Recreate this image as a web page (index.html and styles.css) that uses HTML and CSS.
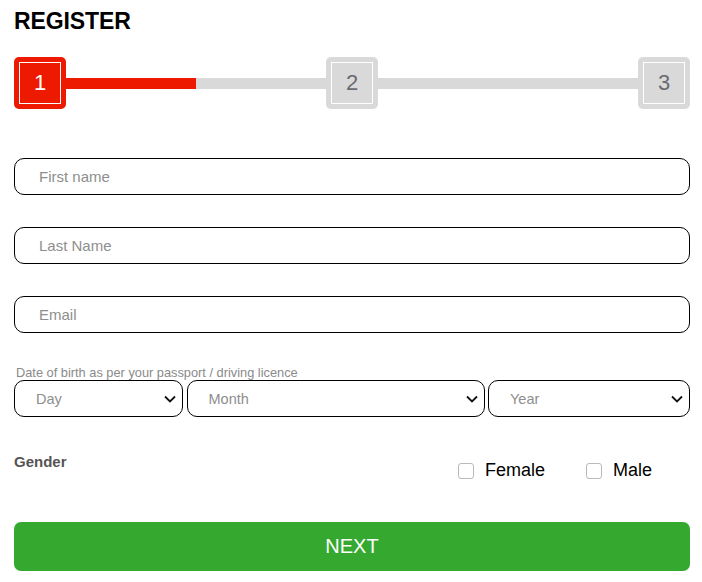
FILE: index.html
```html
<!DOCTYPE html>
<html lang="en">
<head>
  <meta charset="UTF-8">
  <meta name="viewport" content="width=device-width, initial-scale=1.0">
  <title>Register</title>
  <link rel="stylesheet" href="styles.css">
</head>
<body>
  <main class="rg-wrap">
    <h1 class="rg-title">REGISTER</h1>

    <div class="rg-steps">
      <div class="rg-step rg-step--active"><span class="rg-step__inner">1</span></div>
      <div class="rg-track rg-track--half"></div>
      <div class="rg-step"><span class="rg-step__inner">2</span></div>
      <div class="rg-track"></div>
      <div class="rg-step"><span class="rg-step__inner">3</span></div>
    </div>

    <form class="rg-form">
      <input type="text" class="rg-input" placeholder="First name">
      <input type="text" class="rg-input" placeholder="Last Name">
      <input type="email" class="rg-input" placeholder="Email">

      <div class="rg-dob">
        <label class="rg-dob__label">Date of birth as per your passport / driving licence</label>
        <div class="rg-dob__row">
          <div class="rg-select-wrap">
            <select class="rg-select"><option>Day</option></select>
            <svg class="rg-chevron" width="12" height="8" viewBox="0 0 12 8"><path d="M1 1.5l5 5 5-5" fill="none" stroke="#111" stroke-width="1.8"/></svg>
          </div>
          <div class="rg-select-wrap">
            <select class="rg-select"><option>Month</option></select>
            <svg class="rg-chevron" width="12" height="8" viewBox="0 0 12 8"><path d="M1 1.5l5 5 5-5" fill="none" stroke="#111" stroke-width="1.8"/></svg>
          </div>
          <div class="rg-select-wrap">
            <select class="rg-select"><option>Year</option></select>
            <svg class="rg-chevron" width="12" height="8" viewBox="0 0 12 8"><path d="M1 1.5l5 5 5-5" fill="none" stroke="#111" stroke-width="1.8"/></svg>
          </div>
        </div>
      </div>

      <div class="rg-gender">
        <span class="rg-gender__label">Gender</span>
        <div class="rg-gender__opts">
          <label class="rg-check"><input type="checkbox"><span>Female</span></label>
          <label class="rg-check"><input type="checkbox"><span>Male</span></label>
        </div>
      </div>

      <button type="button" class="rg-btn">NEXT</button>
    </form>
  </main>
</body>
</html>
```

FILE: styles.css
```css
/* Root resets */
* { margin: 0; padding: 0; box-sizing: border-box; }
body { font-family: 'Liberation Sans', Arial, sans-serif; background: #ffffff; color: #000000; }

.rg-wrap { padding: 8px 12px 0 14px; }
.rg-title { font-size: 23px; font-weight: 700; line-height: 26px; letter-spacing: -0.1px; }

/* Step indicator */
.rg-steps { display: flex; align-items: center; margin-top: 23px; }
.rg-step {
  width: 52px;
  height: 52px;
  flex: none;
  background: #d9d9d9;
  border-radius: 5px;
  padding: 5px;
}
.rg-step__inner {
  display: flex;
  align-items: center;
  justify-content: center;
  width: 100%;
  height: 100%;
  border: 1px solid #ffffff;
  font-size: 22px;
  color: #6a6a72;
}
.rg-step--active { background: #ee1a00; }
.rg-step--active .rg-step__inner { color: #ffffff; }
.rg-track { flex: 1; height: 11px; background: #d9d9d9; }
.rg-track--half { background: linear-gradient(to right, #ee1a00 50%, #d9d9d9 50%); }

/* Form */
.rg-form { display: flex; flex-direction: column; margin-top: 49px; }
.rg-input {
  height: 37px;
  border: 1px solid #000000;
  border-radius: 10px;
  padding: 0 24px;
  font-family: inherit;
  font-size: 15px;
  margin-bottom: 32px;
  outline: none;
}
.rg-input::placeholder { color: #8e8e8e; }

.rg-dob { margin-top: 1px; }
.rg-dob__label { display: block; font-size: 12.8px; color: #8a8a8a; padding-left: 2px; line-height: 14px; }
.rg-dob__row { display: grid; grid-template-columns: 169px 298px 202px; gap: 3.5px; }
.rg-select-wrap { position: relative; }
.rg-select {
  appearance: none;
  width: 100%;
  height: 37px;
  border: 1px solid #000000;
  border-radius: 10px;
  padding: 0 0 0 21px;
  font-family: inherit;
  font-size: 14.5px;
  color: #8e8e8e;
  background: #ffffff;
  outline: none;
}
.rg-chevron { position: absolute; right: 7px; top: 15px; pointer-events: none; }

/* Gender row */
.rg-gender { display: flex; justify-content: space-between; align-items: flex-start; margin-top: 36px; padding-right: 38px; }
.rg-gender__label { font-size: 15px; font-weight: 700; color: #555555; }
.rg-gender__opts { display: flex; gap: 41px; margin-top: 7px; }
.rg-check { display: flex; align-items: center; gap: 11px; font-size: 18px; }
.rg-check input {
  appearance: none;
  width: 16px;
  height: 16px;
  border: 1px solid #b9b9b9;
  border-radius: 3px;
  background: #ffffff;
}

.rg-btn {
  margin-top: 41px;
  height: 49px;
  border: none;
  border-radius: 7px;
  background: #34a82f;
  color: #ffffff;
  font-family: inherit;
  font-size: 20px;
  cursor: pointer;
}
```
